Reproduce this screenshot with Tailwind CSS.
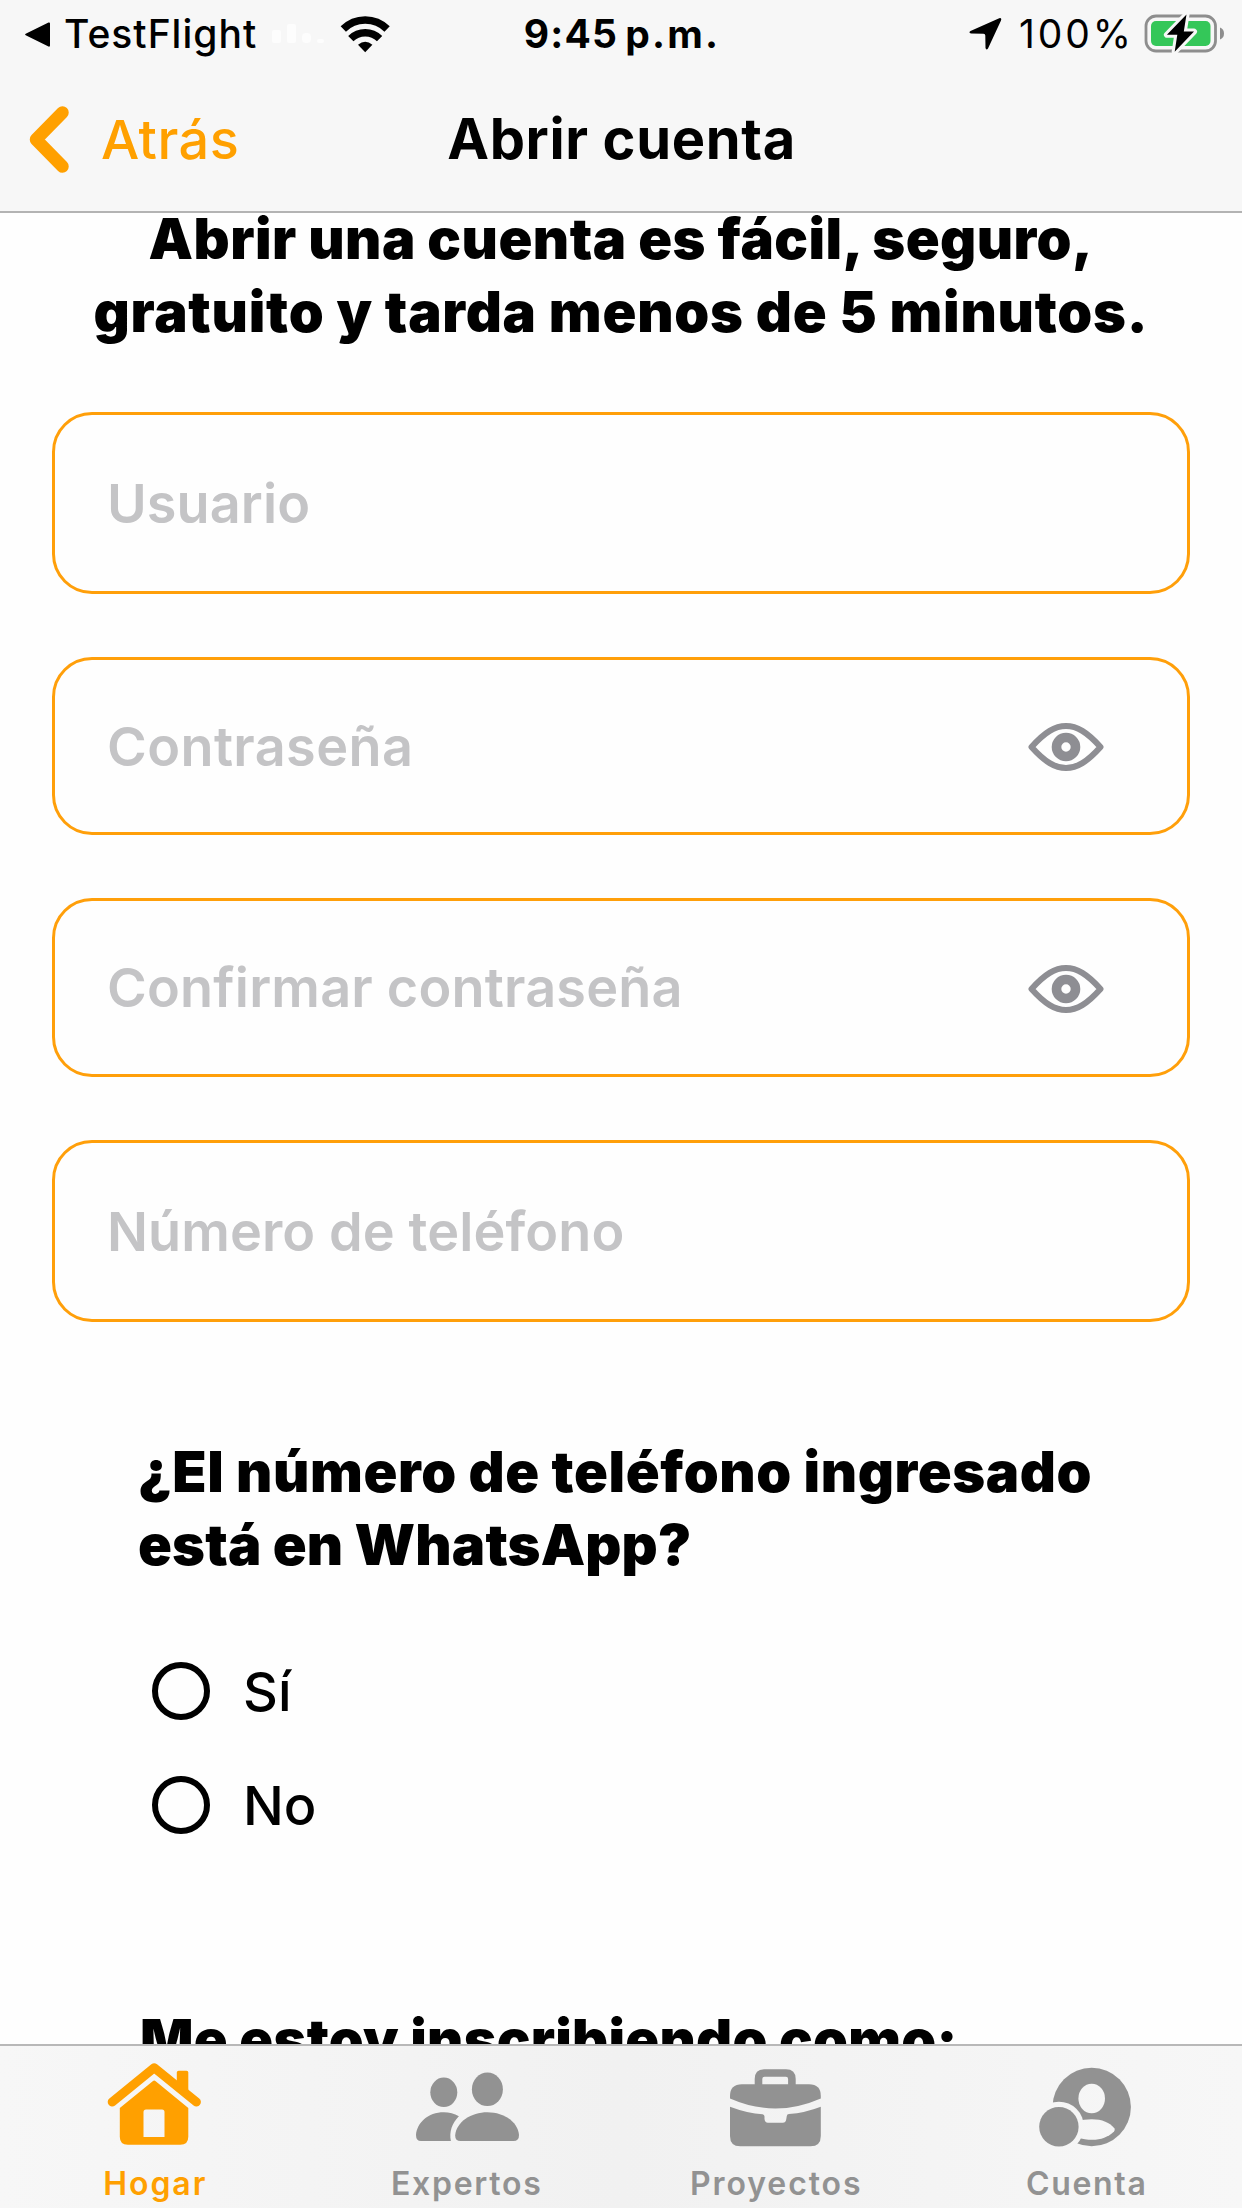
<!DOCTYPE html>
<html lang="es">
<head>
    <meta charset="UTF-8">
    <meta name="viewport" content="width=device-width, initial-scale=1.0">
    <title>Abrir cuenta</title>
    <script src="https://cdn.jsdelivr.net/npm/@tailwindcss/browser@4"></script>
</head>
<body class="font-['Inter','Liberation_Sans',sans-serif] text-black bg-[#fefefe]">
    <div class="w-[1242px] h-[2208px] flex flex-col overflow-hidden">
        <header class="h-[213px] shrink-0 flex flex-col bg-[#f7f7f7] border-b-2 border-[#b3b3b3]">
            <!-- Status bar -->
            <div class="h-[68px] grid grid-cols-[1fr_auto_1fr] items-center text-[39px] leading-[68px]">
                <div class="flex items-center pl-6">
                    <svg class="w-[27px] h-[27px]" viewBox="0 0 27 27"><path d="M2.2 12.6 24.5 1.5Q26 1 26 2.5V24.5Q26 26 24.5 25.5L2.2 14.6Q0 13.6 2.2 12.6Z"/></svg>
                    <span class="ml-[13px] w-[191px] font-medium tracking-[1px] whitespace-nowrap">TestFlight</span>
                    <svg class="ml-[16px] w-[54px] h-[20px]" viewBox="0 0 54 20" fill="#fdfdfd"><rect x="1" y="6" width="9" height="13" rx="2"/><rect x="16" width="9" height="19" rx="2"/><rect x="31" y="9" width="9" height="10" rx="4"/><rect x="46" y="15" width="7" height="4" rx="2"/></svg>
                    <svg class="ml-[15px] w-[50px] h-[38px]" viewBox="0 0 50 38" fill="none" stroke="#000">
                        <path d="M3.3 14A31 31 0 0 1 47.1 14" stroke-width="7.5"/>
                        <path d="M10.8 23.6A20.5 20.5 0 0 1 39.6 23.6" stroke-width="7.5"/>
                        <path d="M25.2 37.2 18 29.8Q25.2 23.8 32.4 29.8Z" fill="#000" stroke="none"/>
                    </svg>
                </div>
                <div class="pl-[2px] font-bold flex"><span class="tracking-[1.2px]">9:45</span><span class="ml-[7px] tracking-[2.2px]">p.m.</span></div>
                <div class="flex items-center justify-end pr-[18px]">
                    <svg class="w-[34px] h-[34px]" viewBox="0 0 34 34"><path d="M31.2 1.2Q34 .6 33 3.6L20 31.4Q18.3 33.6 17.5 31L17.3 18.5Q17.3 16.7 15.5 16.7L3 16.5Q.2 15.7 2.5 14Z"/></svg>
                    <span class="ml-[17px] w-[112px] tracking-[2.9px] whitespace-nowrap">100%</span>
                    <svg class="ml-[13px] w-[80px] h-[42px]" viewBox="0 0 80 42">
                        <rect x="2" y="3" width="69.5" height="35" rx="10" fill="none" stroke="#8e8e8e" stroke-width="2.8"/>
                        <rect x="7" y="8" width="59.5" height="25" rx="5" fill="#34c759"/>
                        <path d="M76 14.5Q80 16 80 20.5T76 26.5Z" fill="#8e8e8e"/>
                        <path d="M42.5 1.5 22.9 21.8H33.3L30.7 38.8 50 18.6H39.8Z" fill="#000" stroke="#f7f7f7" stroke-width="6" stroke-linejoin="round" paint-order="stroke"/>
                    </svg>
                </div>
            </div>
            <!-- Nav bar -->
            <nav class="h-[143px] grid grid-cols-[1fr_auto_1fr] items-center text-[54px] leading-[73px]">
                <a class="flex items-center pl-[29px] text-[#ffa000]">
                    <svg class="w-[40px] h-[67px]" viewBox="0 0 40 67" fill="none" stroke="#ffa000" stroke-width="12.5" stroke-linecap="round" stroke-linejoin="round"><path d="M33.5 6.5 7 33.5 33.5 60.5"/></svg>
                    <span class="ml-[32px] font-medium tracking-[.5px]">Atrás</span>
                </a>
                <h1 class="pl-[1px] font-bold text-[56px] tracking-[.64px]">Abrir cuenta</h1>
            </nav>
        </header>

        <main class="flex-1 min-h-0 overflow-hidden flex flex-col px-[52px]">
            <h2 class="-mt-[10px] shrink-0 text-center text-[56px] leading-[73px] font-black whitespace-nowrap">
                <span class="block tracking-[.45px]">Abrir una cuenta es fácil, seguro,</span>
                <span class="block tracking-[.79px]">gratuito y tarda menos de 5 minutos.</span>
            </h2>

            <div class="mt-[63px] shrink-0 flex flex-col text-[54px] font-semibold text-[#c4c4c6]">
                <div class="h-[182px] flex items-center pl-[52px] border-3 border-[#ff9f0a] rounded-[40px] tracking-[.1px]">Usuario</div>
                <div class="mt-[63px] h-[178px] flex items-center justify-between pl-[52px] pr-[83px] border-3 border-[#ff9f0a] rounded-[40px]">
                    <span class="tracking-[.4px]">Contraseña</span>
                    <svg class="w-[76px] h-[50px]" viewBox="0 -2 76 50"><path d="M3.5 24C17 9 27 3 38 3S59 9 72.5 24C59 39 49 45 38 45S17 39 3.5 24Z" fill="none" stroke="#8e8e93" stroke-width="6" stroke-linejoin="round"/><circle cx="38" cy="24" r="9.5" fill="none" stroke="#8e8e93" stroke-width="9.6"/></svg>
                </div>
                <div class="mt-[63px] h-[179px] flex items-center justify-between pl-[52px] pr-[83px] border-3 border-[#ff9f0a] rounded-[40px]">
                    <span class="tracking-[.2px]">Confirmar contraseña</span>
                    <svg class="w-[76px] h-[50px]" viewBox="0 -2 76 50"><path d="M3.5 24C17 9 27 3 38 3S59 9 72.5 24C59 39 49 45 38 45S17 39 3.5 24Z" fill="none" stroke="#8e8e93" stroke-width="6" stroke-linejoin="round"/><circle cx="38" cy="24" r="9.5" fill="none" stroke="#8e8e93" stroke-width="9.6"/></svg>
                </div>
                <div class="mt-[63px] h-[182px] flex items-center pl-[52px] border-3 border-[#ff9f0a] rounded-[40px] tracking-[.1px]">Número de teléfono</div>
            </div>

            <div class="mt-[114px] shrink-0 pl-[86px] text-[54px] leading-[73px] whitespace-nowrap">
                <h3 class="font-black text-[56px]">
                    <span class="block tracking-[.6px]">¿El número de teléfono ingresado</span>
                    <span class="block tracking-[.13px]">está en WhatsApp?</span>
                </h3>
                <div class="mt-[80px] pl-[14px] flex flex-col gap-[56px] font-medium">
                    <label class="h-[58px] flex items-center gap-[33px]"><span class="size-[58px] rounded-full border-[6px] border-black"></span><span>Sí</span></label>
                    <label class="h-[58px] flex items-center gap-[33px]"><span class="size-[58px] rounded-full border-[6px] border-black"></span><span>No</span></label>
                </div>
                <h3 class="mt-[170px] pl-[2px] font-black text-[56px] tracking-[.23px]">Me estoy inscribiendo como:</h3>
            </div>
        </main>

        <!-- Tab bar -->
        <footer class="h-[164px] shrink-0 grid grid-cols-4 bg-linear-to-r from-[#f7f7f7] via-[#f1f1f1] to-[#f7f7f7] border-t-2 border-[#b8b8b8] text-[32px] leading-[40px] font-semibold text-[#929292]">
            <a class="flex flex-col items-center pt-[14px] text-[#ffa000]">
                <svg class="w-[120px] h-[90px]" viewBox="0 0 120 90" fill="#ffa000">
                    <path d="M81.8 28V12.5Q81.8 10.7 83.6 10.7H91.5Q93.3 10.7 93.3 12.5V38Z"/>
                    <path d="M17.2 42 59.2 7.8 101.4 42" fill="none" stroke="#ffa000" stroke-width="9" stroke-linecap="round" stroke-linejoin="round"/>
                    <path fill-rule="evenodd" d="M57.7 21.2Q59.2 20 60.7 21.2L93.3 48V76.8Q93.3 84.8 85.3 84.8H32.8Q24.8 84.8 24.8 76.8V48ZM51 49.5Q48.5 49.5 48.5 52V77H69.5V52Q69.5 49.5 67 49.5Z"/>
                </svg>
                <span class="mt-[14px] tracking-[1.95px]">Hogar</span>
            </a>
            <a class="flex flex-col items-center pt-[14px]">
                <svg class="w-[120px] h-[90px]" viewBox="0 0 120 90" fill="#929292">
                    <ellipse cx="37.8" cy="32.3" rx="13.5" ry="14.7"/>
                    <ellipse cx="81.4" cy="29.3" rx="15.5" ry="16.8"/>
                    <path d="M37.8 52.3Q46 52.3 52.9 56.2C46 63 43 72 44.9 81H15Q10 81 10 75C11 63 22 52.3 37.8 52.3Z"/>
                    <path d="M81.4 52.3C98 52.3 112 62 113 75Q113 81 107.5 81H54.5Q49 81 49.2 75C50.5 62 65 52.3 81.4 52.3Z"/>
                </svg>
                <span class="mt-[14px] pl-[2px] tracking-[1.7px]">Expertos</span>
            </a>
            <a class="flex flex-col items-center pt-[14px]">
                <svg class="w-[120px] h-[90px]" viewBox="0 0 120 90" fill="#929292">
                    <path d="M42.5 26V19Q42.5 13 48.5 13H69.9Q75.9 13 75.9 19V26" fill="none" stroke="#929292" stroke-width="7.6"/>
                    <path d="M14 38.5V36Q14 24.3 26 24.3H93Q104.8 24.3 104.8 36V38.5Q82 48.500 59.4 48.500T14 38.500Z"/>
                    <path d="M14 46.7Q32 53.5 46.5 54.2Q48.5 54.4 48.5 56.5V59Q48.8 62.7 52 62.7H66.8Q70 62.7 70.3 59L70.8 56Q71 54.3 73 54.1Q89 52.8 104.8 46.7V76Q104.8 86.3 94.5 86.3H24.3Q14 86.3 14 76Z"/>
                </svg>
                <span class="mt-[14px] tracking-[1.9px]">Proyectos</span>
            </a>
            <a class="flex flex-col items-center pt-[14px]">
                <svg class="w-[120px] h-[90px]" viewBox="0 0 120 90" fill="#929292">
                    <mask id="avatar">
                        <circle cx="64.7" cy="47" r="39.2" fill="#fff"/>
                        <ellipse cx="64.7" cy="38.5" rx="13.3" ry="14.7" fill="#000"/>
                        <path d="M50 61Q57 59.2 64.7 59.2C75 59.2 83 62.5 87.5 68.5Q88.3 70 87 71.5C78 80 66 82 50 77.5Z" fill="#000"/>
                        <circle cx="31.9" cy="66.7" r="25" fill="#000"/>
                    </mask>
                    <rect width="120" height="90" mask="url(#avatar)"/>
                    <circle cx="31.9" cy="66.7" r="19.7"/>
                </svg>
                <span class="mt-[14px] tracking-[1.7px]">Cuenta</span>
            </a>
        </footer>
    </div>
</body>
</html>
